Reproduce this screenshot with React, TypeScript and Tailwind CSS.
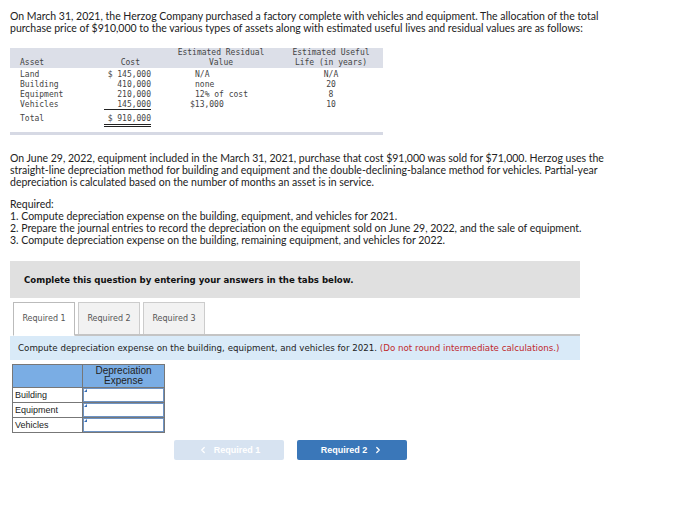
import { ChevronLeft, ChevronRight } from 'lucide-react'

const body = { fontFamily: 'Lato, "Open Sans", sans-serif' }
const mono = { fontFamily: '"DejaVu Sans Mono", "Liberation Mono", monospace' }
const verdana = { fontFamily: '"DejaVu Sans", Verdana, sans-serif' }
const arial = { fontFamily: '"Liberation Sans", Arial, sans-serif' }

const assets = [
  { name: 'Land', cost: '$ 145,000', residual: 'N/A', life: 'N/A', rPad: 'pl-[44px]' },
  { name: 'Building', cost: '410,000', residual: 'none', life: '20', rPad: 'pl-[44px]' },
  { name: 'Equipment', cost: '210,000', residual: '12% of cost', life: '8', rPad: 'pl-[44px]' },
  { name: 'Vehicles', cost: '145,000', residual: '$13,000', life: '10', rPad: 'pl-[39px]' },
]

function AssetTable() {
  return (
    <div className="mt-[14px] w-[373px] whitespace-nowrap text-[8px] leading-[10px] text-[#444]" style={mono}>
      <div className="flex h-[20px] items-end bg-[#dcdfe8]">
        <div className="w-[80px] pl-[10px]">Asset</div>
        <div className="w-[61px] pr-[11px] text-right">Cost</div>
        <div className="w-[140px] text-center">
          Estimated Residual
          <br />
          Value
        </div>
        <div className="w-[80px] text-center">
          Estimated Useful
          <br />
          Life (in years)
        </div>
      </div>
      <div className="h-[2px]" />
      {assets.map((a) => (
        <div key={a.name} className="flex h-[10px]">
          <div className="w-[80px] pl-[10px]">{a.name}</div>
          <div className="flex w-[61px] justify-end">
            <div className={`w-[47px] text-right ${a.name === 'Vehicles' ? 'border-b border-[#222]' : ''}`}>{a.cost}</div>
          </div>
          <div className={`w-[140px] ${a.rPad}`}>{a.residual}</div>
          <div className="w-[80px] text-center">{a.life}</div>
        </div>
      ))}
      <div className="flex h-[17px] items-start pt-[4px]">
        <div className="w-[80px] pl-[10px]">Total</div>
        <div className="ml-[14px] w-[47px] border-b-[3px] border-double border-[#222] text-right">$ 910,000</div>
      </div>
      <div className="mt-[5px] h-[3px] bg-[#d6d9e4]" />
    </div>
  )
}

function Tabs() {
  const tabs = ['Required 1', 'Required 2', 'Required 3']
  return (
    <div className="ml-[3px] mt-[4px] flex w-[567px] items-end gap-[3px] border-b-2 border-[#c4c4c4]" style={verdana}>
      {tabs.map((t, i) => (
        <div
          key={t}
          className={`flex w-[62px] items-center justify-center border text-[8px] text-[#555] ${
            i === 0 ? '-mb-[2px] h-[34px] border-[#bbb] border-b-white bg-white' : 'h-[32px] border-[#ccc] border-b-0 bg-[#f2f2f2]'
          }`}
        >
          {t}
        </div>
      ))}
    </div>
  )
}

function AnswerTable() {
  const rows = ['Building', 'Equipment', 'Vehicles']
  return (
    <table className="ml-[2px] mt-[4px] border-collapse text-[9px] text-[#222]" style={arial}>
      <thead>
        <tr className="bg-[#7aade4]">
          <th className="h-[23px] w-[70px] border border-[#777]" />
          <th className="w-[82px] border border-[#777] text-[10px] font-normal leading-[10px] text-[#222]">
            Depreciation
            <br />
            Expense
          </th>
        </tr>
      </thead>
      <tbody>
        {rows.map((r) => (
          <tr key={r}>
            <td className="h-[15px] border border-[#777] pl-[2px] text-[9px]">{r}</td>
            <td className="border border-[#777] p-0">
              <div className="relative h-[14px] border border-[#6d93c4] bg-white">
                <span className="absolute left-0 top-0 h-0 w-0 rotate-90 border-l-[3px] border-t-[3px] border-l-transparent border-t-[#3a6fb5]" />
              </div>
            </td>
          </tr>
        ))}
      </tbody>
    </table>
  )
}

export default function App() {
  return (
    <div className="min-h-[508px] w-[697px] bg-white px-[10px] pt-[10px] text-[10.5px] leading-[12px] text-[#222]" style={body}>
      <p className="whitespace-nowrap">
        On March 31, 2021, the Herzog Company purchased a factory complete with vehicles and equipment. The allocation of the total
        <br />
        purchase price of $910,000 to the various types of assets along with estimated useful lives and residual values are as follows:
      </p>

      <AssetTable />

      <p className="mt-[17px] whitespace-nowrap">
        On June 29, 2022, equipment included in the March 31, 2021, purchase that cost $91,000 was sold for $71,000. Herzog uses the
        <br />
        straight-line depreciation method for building and equipment and the double-declining-balance method for vehicles. Partial-year
        <br />
        depreciation is calculated based on the number of months an asset is in service.
      </p>

      <div className="mt-[10px] whitespace-nowrap">
        <p>Required:</p>
        <p>1. Compute depreciation expense on the building, equipment, and vehicles for 2021.</p>
        <p>2. Prepare the journal entries to record the depreciation on the equipment sold on June 29, 2022, and the sale of equipment.</p>
        <p>3. Compute depreciation expense on the building, remaining equipment, and vehicles for 2022.</p>
      </div>

      <div className="mt-[15px] flex h-[37px] w-[570px] items-center bg-[#e0e0e0] pl-[14px] text-[8.6px] font-bold text-[#111]" style={verdana}>
        Complete this question by entering your answers in the tabs below.
      </div>

      <Tabs />

      <div className="flex h-[24px] w-[570px] items-center whitespace-nowrap bg-[#d9eaf8] pl-[8px] text-[8.7px] text-[#222]" style={verdana}>
        Compute depreciation expense on the building, equipment, and vehicles for 2021.&nbsp;
        <span className="text-[#c0282d]">(Do not round intermediate calculations.)</span>
      </div>

      <AnswerTable />

      <div className="ml-[164px] mt-[7px] flex gap-[13px] text-[9px] font-bold text-white" style={arial}>
        <button className="flex h-[20px] w-[110px] items-center justify-center gap-[6px] rounded-[2px] bg-[#d7e3f1]">
          <ChevronLeft size={10} strokeWidth={3} />
          Required 1
        </button>
        <button className="flex h-[20px] w-[110px] items-center justify-center gap-[6px] rounded-[2px] bg-[#3a77b9]">
          Required 2
          <ChevronRight size={10} strokeWidth={3} />
        </button>
      </div>
    </div>
  )
}
